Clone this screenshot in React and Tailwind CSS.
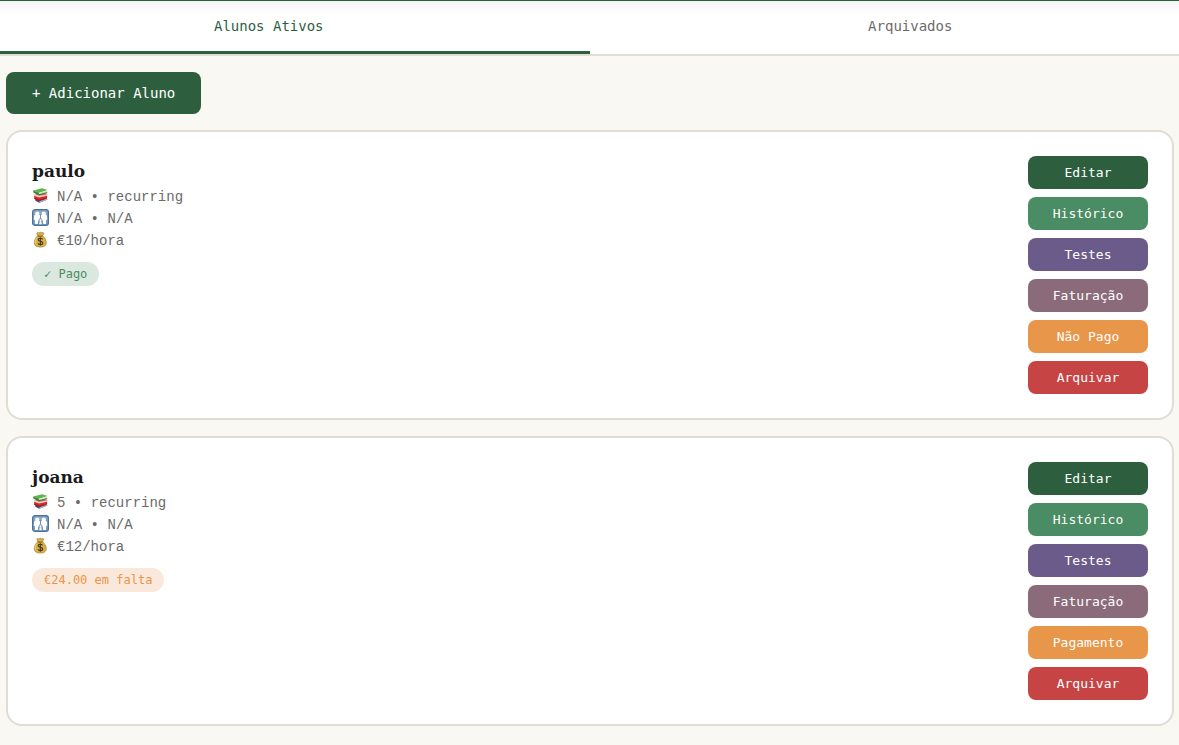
import { useState } from 'react'

const students = [
  {
    id: 1,
    name: 'paulo',
    grade: 'N/A',
    type: 'recurring',
    parent: 'N/A',
    phone: 'N/A',
    rate: 10,
    owed: 0,
  },
  {
    id: 2,
    name: 'joana',
    grade: '5',
    type: 'recurring',
    parent: 'N/A',
    phone: 'N/A',
    rate: 12,
    owed: 24,
  },
]

function BooksIcon() {
  return (
    <svg viewBox="0 0 18 18" className="mt-px size-[17px] shrink-0" aria-hidden="true">
      <path d="M3.4 11.6 13 11l3.4 2.2-8.8 3.6-4-2.2z" fill="#434c6c" />
      <path d="M7.8 15l8.2-2.7.2 1.3-8.4 3.2z" fill="#a9aec2" />
      <path d="M2.4 7.4 15 6.4l1.4 2-8.4 2.4z" fill="#d9584c" />
      <path d="M2.4 7.2 7.6 9.3l8.6-1.7v1.5l-8.6 2.1-5.4-2z" fill="#ded4d2" />
      <path d="M2.2 9.2l5.4 2 8.4-2v2.6l-8.4 2.5-5.2-2.1z" fill="#dc2623" />
      <path d="M2.4 11.4l5.2 2.1 8.4-2.4v.9l-8.4 2.6-5.2-2z" fill="#a5191c" />
      <path d="M1.2 3.6 10.6 1.2l6 2-9.2 3z" fill="#5cb64b" />
      <path d="M1.2 3.6l6.2 2.6v2.5L1.6 6.1z" fill="#37892f" />
      <path d="M7.4 6.3 16 3.6v1.8L7.4 8z" fill="#d5e2cf" />
      <path d="M7.4 7.8l8.8-2.6v.9L7.4 8.8z" fill="#2e7b2b" />
    </svg>
  )
}

function FamilyIcon() {
  return (
    <svg viewBox="0 0 18 18" className="mt-px size-[17px] shrink-0" aria-hidden="true">
      <rect x="0.6" y="0.6" width="16.8" height="16.8" rx="2.6" fill="#7698be" stroke="#4d6f98" strokeWidth="1.2" />
      <path d="M1.6 3.2q0-1.6 1.6-1.6h11.6q1.6 0 1.6 1.6v2H1.6z" fill="#9ab5d2" opacity="0.5" />
      <g fill="#fff">
        <circle cx="5.6" cy="4.8" r="2.2" />
        <circle cx="12.4" cy="4.8" r="2.2" />
        <path d="M3.6 5.8h3.7q1.3.3 1.3 2v1.4L7.2 11l-.8 5H3.2L3 11.6l-1.2-.6.4-3.6q.2-1.4 1.4-1.6z" />
        <path d="M10.7 5.8h3.7q1.2.2 1.4 1.6l.4 3.6-1.2.6-.2 4.4h-3.2l-.8-5-1.4-1.8V7.8q0-1.7 1.3-2z" />
        <circle cx="9" cy="12" r="1.2" />
        <path d="M8.2 13h1.6l.5 3.2H7.7z" />
      </g>
      <path d="M9 6v4M7.2 12l-.6 4.2M10.8 12l.6 4.2" stroke="#6a8db5" strokeWidth="0.8" />
    </svg>
  )
}

function MoneyBagIcon() {
  return (
    <svg viewBox="0 0 18 18" className="mt-px size-[17px] shrink-0" aria-hidden="true">
      <path
        d="M6.2 4.9C5.4 3.6 5 2.4 5.5 1.8c.7-.7 1.5.4 2.2 0 .8-.6 1.7-.6 2.4 0 .8.4 1.4-.5 2 .1.5.7-.2 1.9-1 3.1 2.4 1.8 4 4.7 4 7.5 0 3-2.4 4.5-6.4 4.5s-6.3-1.5-6.3-4.5c0-2.8 1.5-5.8 3.8-7.6z"
        fill="#dcb144"
        stroke="#9c7a31"
        strokeWidth="0.7"
      />
      <path d="M5 7.5c-1.4 1.9-2 4.1-1.4 5.8" stroke="#f3d777" strokeWidth="1" fill="none" />
      <path d="M6 5.1q2.7 1 5.2 0" stroke="#88601f" strokeWidth="1.1" fill="none" />
      <path
        d="M11.2 8.9c-.5-.8-1.3-1.2-2.4-1.2-1.4 0-2.3.7-2.3 1.6 0 2.3 4.9 1 4.9 3.4 0 1.1-1 1.7-2.5 1.7-1.3 0-2.2-.5-2.7-1.4M8.8 6.6v9"
        stroke="#463a24"
        strokeWidth="1.2"
        fill="none"
      />
    </svg>
  )
}

function Tab({ label, active, onClick, className }) {
  return (
    <button
      type="button"
      role="tab"
      aria-selected={active}
      onClick={onClick}
      className={`flex-1 cursor-pointer border-b-3 py-4 text-sm leading-[18px] font-medium ${className} ${
        active ? 'border-[#2d5f3f] text-[#2d5f3f]' : 'border-transparent text-[#6b6b6b]'
      }`}
    >
      {label}
    </button>
  )
}

function ActionButton({ color, children }) {
  return (
    <button
      type="button"
      className={`w-full cursor-pointer rounded-lg px-4 py-2 text-[13px] leading-[17px] font-medium text-white ${color}`}
    >
      {children}
    </button>
  )
}

function InfoRow({ icon, children }) {
  return (
    <div className="flex items-start gap-2 font-['Liberation_Mono',monospace] text-sm leading-[22px] text-[#6b6b6b]">
      {icon}
      <span>{children}</span>
    </div>
  )
}

function StudentCard({ student }) {
  const paid = student.owed === 0

  return (
    <article className="flex items-start justify-between gap-4 rounded-2xl border-2 border-[#e0ddd4] bg-white p-6">
      <div>
        <h3 className="font-['DejaVu_Serif',serif] text-[17px] leading-[30px] font-bold text-[#1a1a1a]">
          {student.name}
        </h3>
        <InfoRow icon={<BooksIcon />}>{student.grade} • {student.type}</InfoRow>
        <InfoRow icon={<FamilyIcon />}>{student.parent} • {student.phone}</InfoRow>
        <InfoRow icon={<MoneyBagIcon />}>€{student.rate}/hora</InfoRow>
        <span
          className={`mt-2.5 inline-block rounded-full px-3 py-1 text-xs ${
            paid ? 'bg-[#dbe8e0] text-[#4a8c63]' : 'bg-[#fae9db] text-[#e8964a]'
          }`}
        >
          {paid ? '✓ Pago' : `€${student.owed.toFixed(2)} em falta`}
        </span>
      </div>
      <div className="flex w-30 flex-col gap-2">
        <ActionButton color="bg-[#2d5f3f]">Editar</ActionButton>
        <ActionButton color="bg-[#4a8c63]">Histórico</ActionButton>
        <ActionButton color="bg-[#6b5b8a]">Testes</ActionButton>
        <ActionButton color="bg-[#8b6b7a]">Faturação</ActionButton>
        <ActionButton color="bg-[#e8964a]">{paid ? 'Não Pago' : 'Pagamento'}</ActionButton>
        <ActionButton color="bg-[#c64444]">Arquivar</ActionButton>
      </div>
    </article>
  )
}

export default function App() {
  const [tab, setTab] = useState('active')

  return (
    <div className="min-h-screen bg-[#faf8f3] font-['DejaVu_Sans_Mono',monospace]">
      <div
        role="tablist"
        className="flex border-t border-b-2 border-t-[#2d5f3f] border-b-[#e0ddd4] bg-white bg-linear-to-b from-[#f5f5f5] to-white to-25%"
      >
        <Tab label="Alunos Ativos" active={tab === 'active'} onClick={() => setTab('active')} className="pr-13" />
        <Tab label="Arquivados" active={tab === 'archived'} onClick={() => setTab('archived')} className="pl-13" />
      </div>
      <main className="py-4 pr-[5px] pl-1.5">
        <button
          type="button"
          className="cursor-pointer rounded-lg bg-[#2d5f3f] px-[26px] py-3 text-sm leading-[18px] font-medium text-white"
        >
          + Adicionar Aluno
        </button>
        {tab === 'active' && (
          <div className="mt-4 flex flex-col gap-4">
            {students.map((s) => (
              <StudentCard key={s.id} student={s} />
            ))}
          </div>
        )}
      </main>
    </div>
  )
}
